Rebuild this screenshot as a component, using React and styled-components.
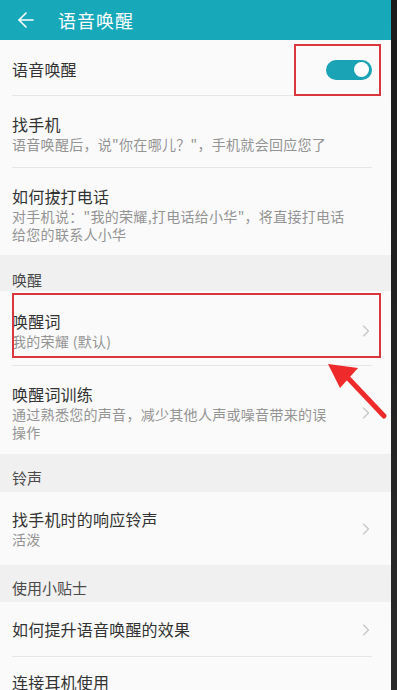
import React from "react";
import styled, { createGlobalStyle } from "styled-components";
import { ArrowLeft, ChevronRight } from "lucide-react";

const GlobalStyle = createGlobalStyle`
  html, body {
    margin: 0;
    padding: 0;
    background: #1c1c1c;
  }
  body {
    font-family: "Noto Sans CJK SC", "Noto Sans", sans-serif;
  }
`;

const Page = styled.div`
  display: flex;
  width: 397px;
  height: 690px;
  overflow: hidden;
`;

const Screen = styled.div`
  position: relative;
  width: 391px;
  display: flex;
  flex-direction: column;
  background: #fafafa;
`;

const Strip = styled.div`
  flex: 1;
  background: linear-gradient(to bottom, #1a1a1a, #2a2a2a);
`;

const Header = styled.div`
  height: 40px;
  flex-shrink: 0;
  display: flex;
  align-items: center;
  gap: 20px;
  padding-left: 14px;
  background: #17a9ba;
  color: #fff;
`;

const HeaderTitle = styled.div`
  font-size: 18px;
  letter-spacing: 1px;
  line-height: 1;
`;

const List = styled.div`
  display: flex;
  flex-direction: column;
`;

const Row = styled.div`
  position: relative;
  display: flex;
  align-items: flex-start;
  margin-left: 12px;
  margin-right: 19px;
  padding: ${(p) => p.$pad};
  border-bottom: ${(p) => (p.$last ? "none" : "1px solid #e6e6e6")};
  flex-shrink: 0;
`;

const Texts = styled.div`
  flex: 1;
  display: flex;
  flex-direction: column;
`;

const Title = styled.div`
  font-size: 16px;
  line-height: 21px;
  color: #333;
  letter-spacing: 0.2px;
`;

const Sub = styled.div`
  font-size: 14px;
  line-height: 18px;
  letter-spacing: 0.3px;
  color: #949494;
  padding-right: 22px;
`;

const Section = styled.div`
  height: ${(p) => p.$h}px;
  padding: ${(p) => p.$top}px 12px 0;
  box-sizing: border-box;
  background: #f0f0f0;
  font-size: 15px;
  line-height: 22px;
  color: #4a4a4a;
  flex-shrink: 0;
`;

const Chevron = styled(ChevronRight)`
  align-self: center;
  color: #c4c4c4;
  flex-shrink: 0;
  margin-right: -4px;
`;

const Toggle = styled.div`
  align-self: center;
  width: 46px;
  height: 20px;
  border-radius: 10px;
  background: #1aa3b4;
  display: flex;
  align-items: center;
  justify-content: flex-end;
  padding-right: 3px;
  box-sizing: border-box;
`;

const Knob = styled.div`
  width: 15px;
  height: 15px;
  border-radius: 50%;
  background: #fff;
`;

const Highlight = styled.div`
  position: absolute;
  border: 2px solid #d9363e;
  pointer-events: none;
`;

const Arrow = styled.svg`
  position: absolute;
  left: 322px;
  top: 358px;
  pointer-events: none;
`;

export default function App() {
  return (
    <>
      <GlobalStyle />
      <Page>
        <Screen>
          <Header>
            <ArrowLeft size={24} strokeWidth={1.6} />
            <HeaderTitle>语音唤醒</HeaderTitle>
          </Header>
          <List>
            <Row $pad="19px 0 15px">
              <Texts>
                <Title>语音唤醒</Title>
              </Texts>
              <Toggle>
                <Knob />
              </Toggle>
              <Highlight style={{ left: 282, right: -9, top: 4, bottom: -1 }} />
            </Row>
            <Row $pad="18px 0 14px">
              <Texts>
                <Title>找手机</Title>
                <Sub>语音唤醒后，说"你在哪儿？"，手机就会回应您了</Sub>
              </Texts>
            </Row>
            <Row $pad="18px 0 12px" $last>
              <Texts>
                <Title>如何拔打电话</Title>
                <Sub>对手机说："我的荣耀,打电话给小华"，将直接打电话给您的联系人小华</Sub>
              </Texts>
            </Row>
            <Section $h={36} $top={14}>唤醒</Section>
            <Row $pad="20px 0 15px">
              <Texts>
                <Title>唤醒词</Title>
                <Sub>我的荣耀 (默认)</Sub>
              </Texts>
              <Chevron size={20} strokeWidth={1.4} />
              <Highlight style={{ left: 0, right: -9, top: 2, bottom: 7 }} />
            </Row>
            <Row $pad="18px 0 13px" $last>
              <Texts>
                <Title>唤醒词训练</Title>
                <Sub>通过熟悉您的声音，减少其他人声或噪音带来的误操作</Sub>
              </Texts>
              <Chevron size={20} strokeWidth={1.4} />
            </Row>
            <Section $h={38} $top={13}>铃声</Section>
            <Row $pad="17px 0 17px" $last>
              <Texts>
                <Title>找手机时的响应铃声</Title>
                <Sub>活泼</Sub>
              </Texts>
              <Chevron size={20} strokeWidth={1.4} />
            </Row>
            <Section $h={37} $top={12}>使用小贴士</Section>
            <Row $pad="17px 0 16px">
              <Texts>
                <Title>如何提升语音唤醒的效果</Title>
              </Texts>
              <Chevron size={20} strokeWidth={1.4} />
            </Row>
            <Row $pad="15px 0 15px" $last>
              <Texts>
                <Title>连接耳机使用</Title>
              </Texts>
            </Row>
          </List>
          <Arrow width="66" height="62" viewBox="0 0 66 62">
            <path d="M62 58 L26 20" stroke="#ee2a2a" strokeWidth="5" strokeLinecap="round" />
            <polygon points="6,6 36,10 18,30" fill="#ee2a2a" />
          </Arrow>
        </Screen>
        <Strip />
      </Page>
    </>
  );
}
